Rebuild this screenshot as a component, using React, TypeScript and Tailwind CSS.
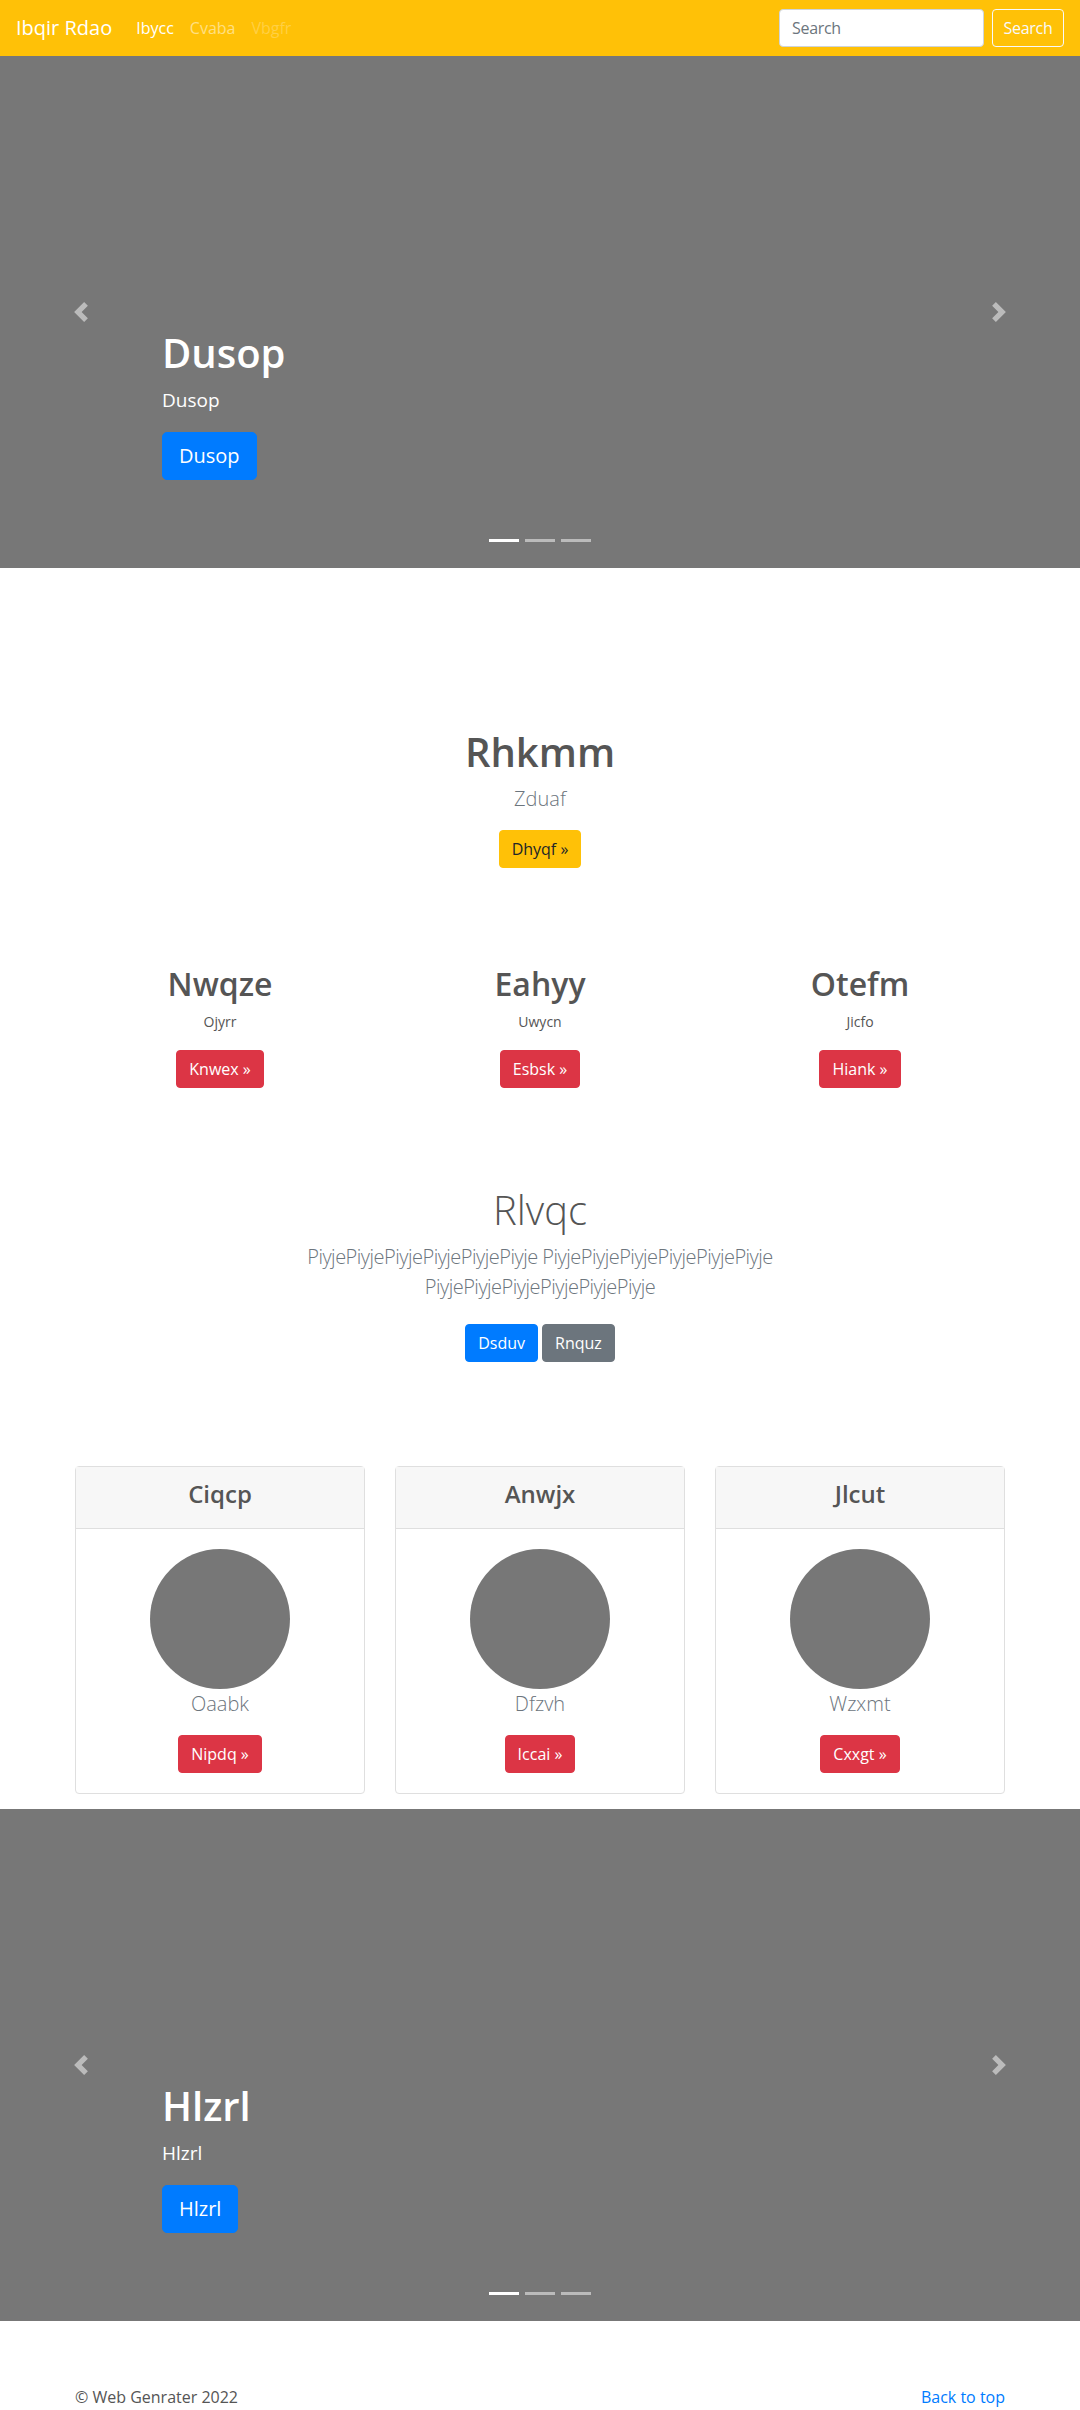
const FONT = { fontFamily: '"Open Sans", "Noto Sans", Arial, sans-serif' };

function Chevron({ dir }: { dir: "prev" | "next" }) {
  const d =
    dir === "prev"
      ? "M5.25 0l-4 4 4 4 1.5-1.5L4.25 4l2.5-2.5L5.25 0z"
      : "M2.75 0l-1.5 1.5L3.75 4l-2.5 2.5L2.75 8l4-4-4-4z";
  return (
    <svg viewBox="0 0 8 8" width="20" height="20" className="opacity-50">
      <path d={d} fill="#fff" />
    </svg>
  );
}

function Carousel({ title }: { title: string }) {
  return (
    <div className="relative h-[512px] bg-[#777]">
      <div className="absolute left-0 top-0 bottom-0 w-[15%] flex items-center justify-center">
        <Chevron dir="prev" />
      </div>
      <div className="absolute right-0 top-0 bottom-0 w-[15%] flex items-center justify-center">
        <Chevron dir="next" />
      </div>
      <div className="absolute left-[15%] bottom-[88px] text-white">
        <h1 className="text-[40px] leading-[48px] font-semibold">{title}</h1>
        <p className="mt-[11px] text-[19px] leading-6">{title}</p>
        <button
          type="button"
          className="mt-[20px] bg-[#007bff] text-white text-[20px] leading-[30px] px-4 py-2 rounded-[5px] border border-[#007bff]"
        >
          {title}
        </button>
      </div>
      <div className="absolute bottom-[26px] left-0 right-0 flex justify-center gap-[6px]">
        <span className="w-[30px] h-[3px] bg-white" />
        <span className="w-[30px] h-[3px] bg-white opacity-50" />
        <span className="w-[30px] h-[3px] bg-white opacity-50" />
      </div>
    </div>
  );
}

const btn = "px-3 py-[6px] text-base leading-6 rounded border";

const cols = [
  { h: "Nwqze", p: "Ojyrr", b: "Knwex" },
  { h: "Eahyy", p: "Uwycn", b: "Esbsk" },
  { h: "Otefm", p: "Jicfo", b: "Hiank" },
];

const cards = [
  { h: "Ciqcp", p: "Oaabk", b: "Nipdq" },
  { h: "Anwjx", p: "Dfzvh", b: "Iccai" },
  { h: "Jlcut", p: "Wzxmt", b: "Cxxgt" },
];

export default function App() {
  return (
    <div style={FONT} className="bg-white text-[#555] w-[1080px]">
      <nav className="h-[56px] bg-[#ffc107] flex items-center px-4">
        <span className="text-[20px] leading-[30px] text-white mr-4">Ibqir Rdao</span>
        <a className="px-2 text-white">Ibycc</a>
        <a className="px-2 text-white/50">Cvaba</a>
        <a className="px-2 text-white/25">Vbgfr</a>
        <div className="ml-auto flex items-center gap-2">
          <div className="w-[205px] h-[38px] bg-white border border-[#ced4da] rounded px-3 flex items-center text-[#6c757d] tracking-[-0.3px]">
            Search
          </div>
          <button
            type="button"
            className="w-[72px] h-[38px] text-base rounded border border-[#f8f9fa] text-[#f8f9fa] tracking-[-0.3px]"
          >
            Search
          </button>
        </div>
      </nav>

      <Carousel title="Dusop" />

      <section className="pt-[160px] text-center">
        <h1 className="text-[40px] leading-[48px] font-semibold">Rhkmm</h1>
        <p className="mt-2 text-[20px] leading-[30px] font-light text-[#6c757d]">Zduaf</p>
        <button type="button" className={`mt-4 ${btn} bg-[#ffc107] border-[#ffc107] text-[#212529]`}>
          Dhyqf »
        </button>
      </section>

      <section className="mt-[97px] w-[960px] mx-auto grid grid-cols-3 text-center">
        {cols.map((c) => (
          <div key={c.h} className="px-[15px]">
            <h2 className="text-[32px] leading-[38px] font-semibold">{c.h}</h2>
            <p className="mt-2 text-sm leading-[21px]">{c.p}</p>
            <button type="button" className={`mt-[18px] ${btn} bg-[#dc3545] border-[#dc3545] text-white`}>
              {c.b} »
            </button>
          </div>
        ))}
      </section>

      <section className="mt-[98px] w-[610px] mx-auto text-center">
        <h1 className="text-[40px] leading-[48px] font-light">Rlvqc</h1>
        <p className="mt-2 text-[20px] leading-[30px] font-light text-[#6c757d] tracking-[-0.5px]">
          PiyjePiyjePiyjePiyjePiyjePiyje PiyjePiyjePiyjePiyjePiyjePiyje PiyjePiyjePiyjePiyjePiyjePiyje
        </p>
        <div className="mt-[22px] flex justify-center gap-1">
          <button type="button" className={`${btn} bg-[#007bff] border-[#007bff] text-white`}>
            Dsduv
          </button>
          <button type="button" className={`${btn} bg-[#6c757d] border-[#6c757d] text-white`}>
            Rnquz
          </button>
        </div>
      </section>

      <section className="mt-[104px] pb-[15px] w-[930px] mx-auto grid grid-cols-3 gap-[30px] text-center">
        {cards.map((c) => (
          <div key={c.h} className="border border-[#dfdfdf] rounded flex flex-col">
            <div className="bg-[#f7f7f7] border-b border-[#dfdfdf] px-5 pt-3 pb-3">
              <h4 className="text-[24px] leading-[29px] font-semibold mb-2">{c.h}</h4>
            </div>
            <div className="p-5 flex flex-col items-center">
              <div className="w-[140px] h-[140px] rounded-full bg-[#777]" />
              <p className="text-[20px] leading-[30px] font-light text-[#6c757d] mb-4">{c.p}</p>
              <button type="button" className={`${btn} bg-[#dc3545] border-[#dc3545] text-white`}>
                {c.b} »
              </button>
            </div>
          </div>
        ))}
      </section>

      <Carousel title="Hlzrl" />

      <footer className="mt-16 pb-4 w-[930px] mx-auto flex justify-between text-base leading-6">
        <p>© Web Genrater 2022</p>
        <a className="text-[#007bff]">Back to top</a>
      </footer>
    </div>
  );
}
